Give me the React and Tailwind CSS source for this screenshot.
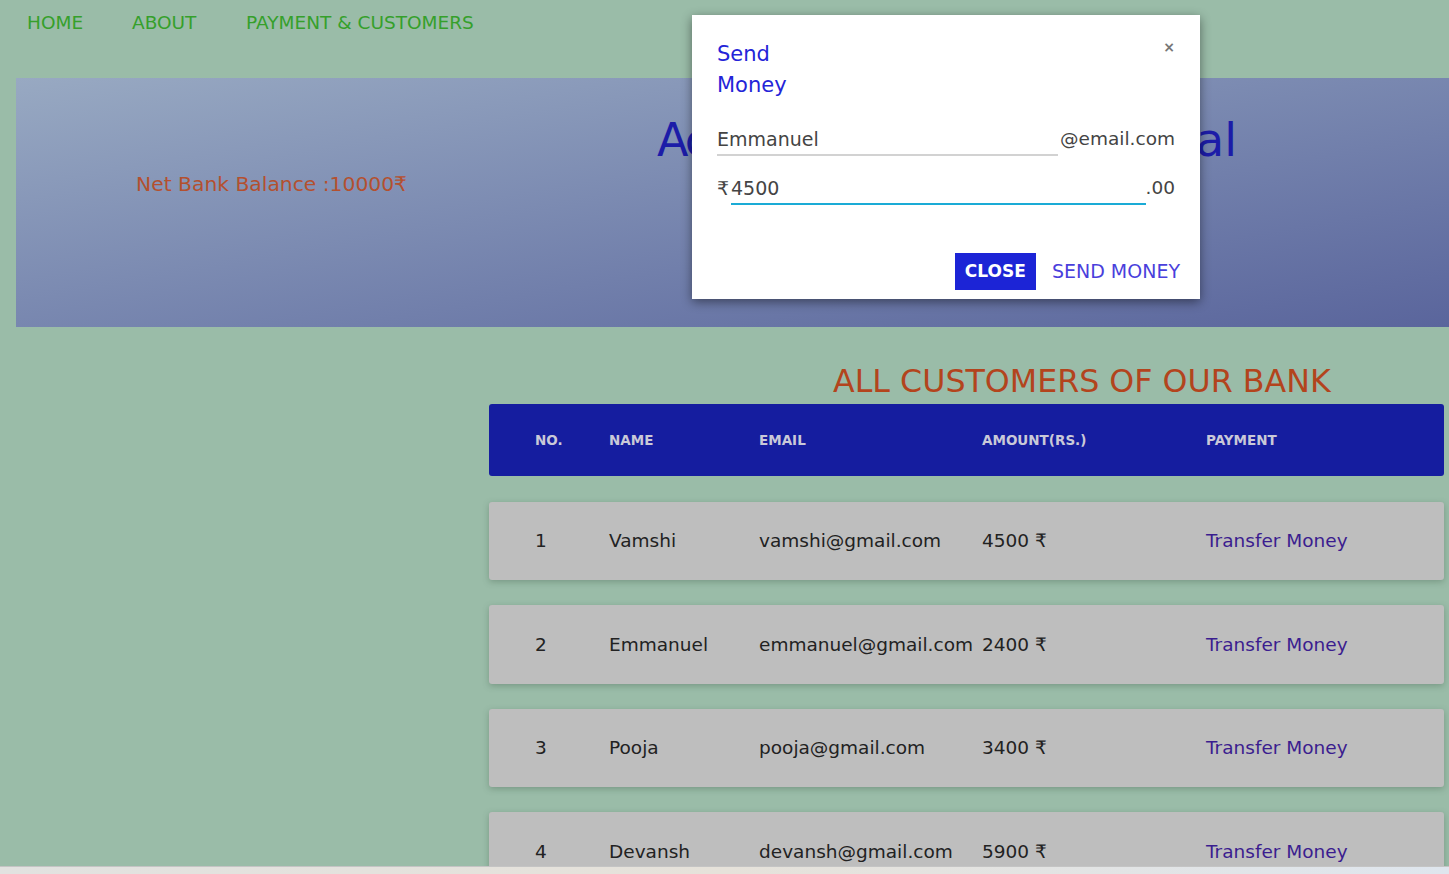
import React from "react";

const rows = [
  { no: 1, name: "Vamshi", email: "vamshi@gmail.com", amount: "4500 ₹" },
  { no: 2, name: "Emmanuel", email: "emmanuel@gmail.com", amount: "2400 ₹" },
  { no: 3, name: "Pooja", email: "pooja@gmail.com", amount: "3400 ₹" },
  { no: 4, name: "Devansh", email: "devansh@gmail.com", amount: "5900 ₹" },
];

export default function App() {
  return (
    <div className="relative h-[874px] w-full overflow-hidden bg-[#9abca8] font-['DejaVu_Sans','Noto_Sans',sans-serif]">
      {/* nav */}
      <nav className="flex h-[78px] pl-[27px] pt-[11px] text-[18.5px] leading-[24px] text-[#35a02b]">
        <a className="w-[105px]">HOME</a>
        <a className="w-[114px]">ABOUT</a>
        <a>PAYMENT &amp; CUSTOMERS</a>
      </nav>

      {/* hero */}
      <section className="ml-4 flex h-[249px] overflow-hidden bg-linear-to-br from-[#98a9c2] to-[#5a659c]">
        <div className="w-[641px] shrink-0 pl-[120px] pt-[94px] text-[20.3px] leading-[24px] text-[#b4502f]">
          Net Bank Balance :10000₹
        </div>
        <div className="shrink-0 whitespace-nowrap pt-[39px] text-[46px] leading-none tracking-[3.5px] text-[#1c1ca8]">
          <span className="tracking-[-3px]">Ac</span>count Holders Port<span className="tracking-normal">al</span>
        </div>
      </section>

      {/* customers */}
      <div className="flex">
        <div className="w-[489px] shrink-0" />
        <div className="w-[955px] shrink-0">
          <h2 className="mb-[6px] ml-[344px] mt-[39px] whitespace-nowrap text-[31.7px] leading-none text-[#b3441d]">
            ALL CUSTOMERS OF OUR BANK
          </h2>
          <div className="grid h-[72px] grid-cols-[74px_150px_223px_224px_1fr] items-center rounded-[3px] bg-[#151d9f] pl-[46px] text-[13.5px] font-semibold text-[#c9c9d8]">
            <div>NO.</div>
            <div>NAME</div>
            <div>EMAIL</div>
            <div>AMOUNT(RS.)</div>
            <div>PAYMENT</div>
          </div>
          <div className="mt-[26px] flex flex-col gap-[25px]">
            {rows.map((r) => (
              <div
                key={r.no}
                className="grid h-[78.6px] grid-cols-[74px_150px_223px_224px_1fr] items-center whitespace-nowrap rounded-[3px] bg-[#bebebe] pl-[46px] text-[18.5px] text-[#222] shadow-[0_2px_6px_rgba(60,90,70,0.35)]"
              >
                <div>{r.no}</div>
                <div>{r.name}</div>
                <div>{r.email}</div>
                <div>{r.amount}</div>
                <div className="text-[#3b1d8f]">Transfer Money</div>
              </div>
            ))}
          </div>
        </div>
      </div>

      {/* modal */}
      <div className="absolute left-[692px] top-[15px] flex h-[284px] w-[508px] flex-col bg-white shadow-[0_3px_10px_rgba(0,0,0,0.45)]">
        <div className="flex items-start justify-between pl-[25px] pr-[25px] pt-[23.5px]">
          <div className="w-[80px] text-[21px] leading-[31px] text-[#2424d8]">
            Send
            <br />
            Money
          </div>
          <div className="mt-[1px] text-[14px] font-bold leading-[14px] text-[#777]">×</div>
        </div>
        <div className="mt-[24.5px] flex items-start px-[25px] text-[19px] leading-[28px] text-[#444]">
          <div className="min-w-0 flex-1 border-b-2 border-[#d2d2d2] pb-[1px]">Emmanuel</div>
          <div className="pl-[2px] text-[18.5px]">@email.com</div>
        </div>
        <div className="mt-[18px] flex items-start px-[25px] text-[19px] leading-[28px] text-[#444]">
          <div className="w-[14px]">₹</div>
          <div className="min-w-0 flex-1 border-b-2 border-[#1aabd6] pb-[1px]">4500</div>
          <div className="text-[18.5px]">.00</div>
        </div>
        <div className="mt-[48px] flex justify-end gap-[4px] pr-[10px]">
          <button className="h-[37px] bg-[#1c24d6] px-[10px] text-[17px] font-semibold text-white">CLOSE</button>
          <button className="h-[37px] pl-[12px] pr-[10px] text-[19px] text-[#4a3fdc]">SEND MONEY</button>
        </div>
      </div>

      {/* taskbar strip */}
      <div className="absolute bottom-0 left-0 right-0 h-[8px] border-t border-[#c4c4c4] bg-linear-to-r from-[#e2e2e0] via-[#e6e2da] to-[#dfe6ee]" />
    </div>
  );
}
